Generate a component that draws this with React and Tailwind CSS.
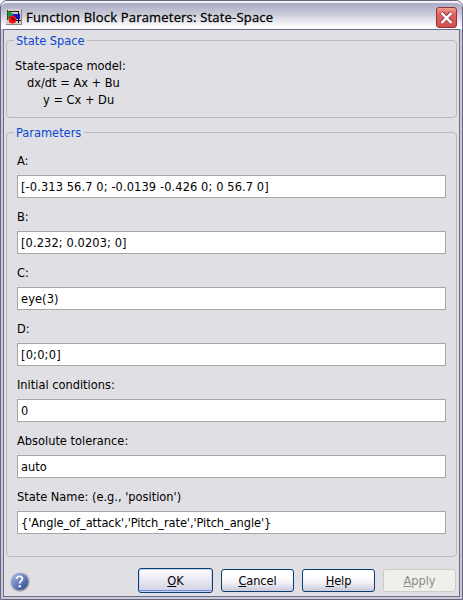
import React from "react";

const fields = [
  { label: "A:", value: "[-0.313 56.7 0; -0.0139 -0.426 0; 0 56.7 0]", tracking: "tracking-[0.11px]" },
  { label: "B:", value: "[0.232; 0.0203; 0]", tracking: "tracking-[0.11px]" },
  { label: "C:", value: "eye(3)", tracking: "tracking-[0.1px]" },
  { label: "D:", value: "[0;0;0]", tracking: "tracking-[0.2px]" },
  { label: "Initial conditions:", value: "0", tracking: "tracking-normal" },
  { label: "Absolute tolerance:", value: "auto", tracking: "tracking-normal" },
  { label: "State Name: (e.g., 'position')", value: "{'Angle_of_attack','Pitch_rate','Pitch_angle'}", tracking: "tracking-[-0.06px]" },
];

function BlockIcon() {
  return (
    <svg width="16" height="16" viewBox="0 0 16 16" shapeRendering="crispEdges" className="shrink-0">
      <rect width="16" height="16" fill="#d2cecb" />
      <path d="M0 15.5H15.5V0" fill="none" stroke="#8b8784" />
      <path d="M1 1V11L9 6Z" fill="#159a48" />
      <path d="M1.5 1V11" stroke="#15552c" />
      <path d="M3 2.5H12.5V5" fill="none" stroke="#222" />
      <rect x="7" y="5" width="7" height="5" fill="#1414e8" />
      <path d="M12.5 3V14M10 11.5H15" stroke="#111" />
      <circle cx="6.5" cy="10.5" r="3.9" fill="#f20d12" shapeRendering="auto" />
      <path d="M6.5 8V10.5H9" fill="none" stroke="#330000" />
    </svg>
  );
}

function CloseButton() {
  return (
    <button className="h-[21px] w-[21px] shrink-0 rounded-[3px] border border-[#983040] bg-linear-to-b from-[#efa18e] via-[#df6461] via-30% to-[#d0504f]">
      <svg width="19" height="19" viewBox="0 0 19 19">
        <path d="M4.5 4.5L14.5 14.5M14.5 4.5L4.5 14.5" stroke="#7d2730" strokeWidth="3.6" />
        <path d="M4.5 4.8L14.5 14.8M14.5 4.8L4.5 14.8" stroke="#fff" strokeWidth="2.4" />
      </svg>
    </button>
  );
}

function HelpIcon() {
  return (
    <svg width="22" height="22" viewBox="0 0 22 22" className="mt-[3px] shrink-0">
      <defs>
        <linearGradient id="ball" x1="0" y1="0" x2="1" y2="1">
          <stop offset="0" stopColor="#b5c5e8" />
          <stop offset="0.45" stopColor="#6f89c4" />
          <stop offset="1" stopColor="#2a4488" />
        </linearGradient>
        <linearGradient id="ring" x1="0" y1="0" x2="1" y2="1">
          <stop offset="0" stopColor="#f4f4f4" />
          <stop offset="1" stopColor="#8e8e94" />
        </linearGradient>
      </defs>
      <circle cx="10.5" cy="10.5" r="10.3" fill="url(#ring)" />
      <circle cx="10.5" cy="10.5" r="8.8" fill="url(#ball)" />
      <path d="M7.6 8C7.6 4.6 13.4 4.6 13.4 7.8C13.4 9.8 10.7 10 10.7 12.4" fill="none" stroke="#f4f6fb" strokeWidth="1.9" />
      <circle cx="10.7" cy="15.2" r="1.2" fill="#f4f6fb" />
    </svg>
  );
}

function Group({ title, className, titleClass, children }) {
  return (
    <fieldset className={"min-w-0 rounded-[4px] border border-[#bcb6be] " + className}>
      <legend className={"ml-[7px] h-[15px] px-[2px] leading-[16px] text-[#0b48d2] " + titleClass}>{title}</legend>
      {children}
    </fieldset>
  );
}

const normal =
  "h-[23px] w-[73px] rounded-[3px] border border-[#0c3e70] bg-linear-to-b from-white from-30% via-[#f2f1f7] via-60% to-[#cbc8dc] leading-[20px] tracking-[-0.1px]";

export default function App() {
  return (
    <div className="h-[600px] w-[463px] overflow-hidden bg-[#f5f5f5] font-['DejaVu_Sans_Condensed','DejaVu_Sans',sans-serif] text-[12.7px] text-black [font-stretch:condensed]">
      <div className="flex h-[600px] w-[463px] flex-col rounded-t-[7px] border border-[#686683] bg-[#c9c8d5] px-[2px] pb-[2px]">
        <header className="-mx-[2px] flex h-[28px] shrink-0 items-center rounded-t-[6px] border-t-2 border-[#f1f1f5] bg-linear-to-b from-[#aaabc5] via-[#c3c4d3] via-35% to-[#fcfcfe] to-90% pl-[5px] pr-[5px] pt-[2px]">
          <BlockIcon />
          <h1 className="ml-[4px] flex-1 whitespace-nowrap font-['Open_Sans','Noto_Sans',sans-serif] text-[13px] font-medium leading-[18px] tracking-[0.19px] [-webkit-text-stroke:0.3px_#000] [font-stretch:normal]">
            Function Block Parameters: State-Space
          </h1>
          <CloseButton />
        </header>
        <main className="flex min-h-0 flex-1 flex-col border border-[#6d6c8c] bg-[#e0dfe4] px-[2px]">
          <Group title="State Space" className="mt-[3px] h-[85px]" titleClass="w-[73px]">
            <div className="whitespace-pre pl-[8px] pt-[9px] leading-[17px]">
              <p>State-space model:</p>
              <p className="pl-[12px]">dx/dt = Ax + Bu</p>
              <p className="pl-[28px]">y = Cx + Du</p>
            </div>
          </Group>
          <Group title="Parameters" className="mt-[7px] h-[432px]" titleClass="w-[70px]">
            <div className="pl-[10px] pr-[10px] pt-[12px]">
              {fields.map((f) => (
                <label key={f.label} className="block h-[56px] whitespace-nowrap">
                  <span className="block h-[23px] leading-[18px]">{f.label}</span>
                  <span className={"block h-[23px] border border-[#a5a6ab] bg-white pl-[3px] leading-[22px] " + f.tracking}>{f.value}</span>
                </label>
              ))}
            </div>
          </Group>
          <footer className="mt-[11px] flex h-[25px] items-center pl-[3px]">
            <HelpIcon />
            <div className="ml-[107px] flex items-center gap-[8px]">
              <button className="h-[25px] w-[75px] rounded-[3px] border border-[#0c3e70] bg-linear-to-b from-white to-[#d2d0e2] leading-[21px] shadow-[inset_0_0_0_1px_#c3d3f5,inset_0_-2px_0_0_#6f8bdc]">
                <u>O</u>K
              </button>
              <button className={normal}><u>C</u>ancel</button>
              <button className={normal}><u>H</u>elp</button>
              <button className="h-[23px] w-[73px] rounded-[3px] border border-[#cdcbc6] bg-[#f0f0eb] leading-[20px] text-[#8c8c8c]">
                <u>A</u>pply
              </button>
            </div>
          </footer>
        </main>
      </div>
    </div>
  );
}
